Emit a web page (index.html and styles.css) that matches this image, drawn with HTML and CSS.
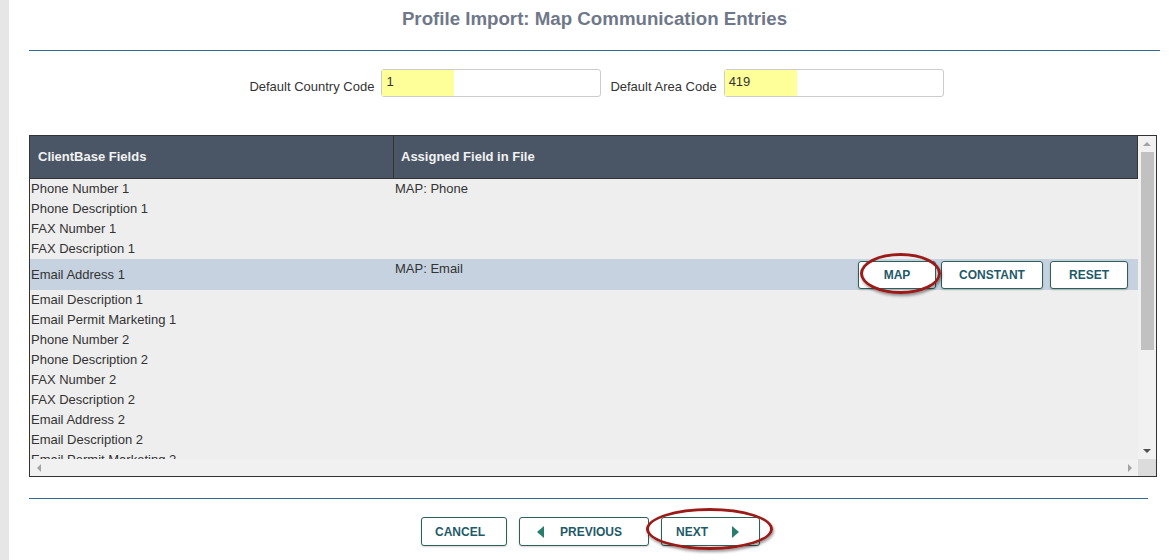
FILE: index.html
```html
<!DOCTYPE html>
<html>
<head>
<meta charset="utf-8">
<link rel="stylesheet" href="styles.css">
</head>
<body>
<div class="sidebar"></div>
<div class="main">
  <h1 class="title">Profile Import: Map Communication Entries</h1>
  <div class="rule rule-top"></div>

  <div class="defaults">
    <label class="lbl">Default Country Code</label>
    <div class="input"><span class="fill">1</span></div>
    <label class="lbl lbl-2">Default Area Code</label>
    <div class="input"><span class="fill">419</span></div>
  </div>

  <div class="grid-frame">
    <div class="viewport">
      <div class="head">
        <div class="hcell hcell-a">ClientBase Fields</div>
        <div class="hcell hcell-b">Assigned Field in File</div>
      </div>
      <div class="row"><div class="ca">Phone Number 1</div><div class="cb">MAP: Phone</div></div>
      <div class="row"><div class="ca">Phone Description 1</div><div class="cb"></div></div>
      <div class="row"><div class="ca">FAX Number 1</div><div class="cb"></div></div>
      <div class="row"><div class="ca">FAX Description 1</div><div class="cb"></div></div>
      <div class="row row-sel">
        <div class="ca">Email Address 1</div>
        <div class="cb">MAP: Email</div>
        <div class="actions">
          <span class="mark-wrap">
            <button class="btn btn-map">MAP</button>
            <span class="ring ring-map"></span>
          </span>
          <button class="btn btn-const">CONSTANT</button>
          <button class="btn btn-reset">RESET</button>
        </div>
      </div>
      <div class="row"><div class="ca">Email Description 1</div><div class="cb"></div></div>
      <div class="row"><div class="ca">Email Permit Marketing 1</div><div class="cb"></div></div>
      <div class="row"><div class="ca">Phone Number 2</div><div class="cb"></div></div>
      <div class="row"><div class="ca">Phone Description 2</div><div class="cb"></div></div>
      <div class="row"><div class="ca">FAX Number 2</div><div class="cb"></div></div>
      <div class="row"><div class="ca">FAX Description 2</div><div class="cb"></div></div>
      <div class="row"><div class="ca">Email Address 2</div><div class="cb"></div></div>
      <div class="row"><div class="ca">Email Description 2</div><div class="cb"></div></div>
      <div class="row"><div class="ca">Email Permit Marketing 2</div><div class="cb"></div></div>
      <div class="row"><div class="ca">Phone Number 3</div><div class="cb"></div></div>
    </div>
    <div class="vscroll">
      <div class="sb-btn"><span class="tri-up"></span></div>
      <div class="thumb"></div>
      <div class="spacer"></div>
      <div class="sb-btn"><span class="tri-down"></span></div>
    </div>
    <div class="hscroll">
      <div class="sb-hbtn"><span class="tri-left"></span></div>
      <div class="spacer"></div>
      <div class="sb-hbtn"><span class="tri-right"></span></div>
    </div>
    <div class="corner"></div>
  </div>

  <div class="footer">
    <div class="rule rule-bottom"></div>
    <div class="nav">
      <button class="btn btn-cancel">CANCEL</button>
      <button class="btn btn-prev"><span class="arrow-left"></span><span>PREVIOUS</span></button>
      <span class="mark-wrap">
        <button class="btn btn-next"><span>NEXT</span><span class="arrow-right"></span></button>
        <span class="ring ring-next"></span>
      </span>
    </div>
  </div>
</div>
</body>
</html>
```

FILE: styles.css
```css
html, body {
  margin: 0;
  padding: 0;
  background: #ffffff;
  font-family: "Liberation Sans", Arial, sans-serif;
  color: #333333;
}
body {
  display: flex;
  min-height: 560px;
  overflow: hidden;
}
.sidebar {
  width: 9px;
  flex: 0 0 9px;
  background: #e6e6e6;
}
.main {
  flex: 1;
  padding: 0 13px 0 20px;
}
.title {
  margin: 0;
  height: 50px;
  box-sizing: border-box;
  padding-top: 8px;
  font-size: 18.7px;
  line-height: 22px;
  font-weight: bold;
  color: #6f7889;
  text-align: center;
}
.rule {
  height: 1px;
  background: #336b98;
}
.defaults {
  display: flex;
  justify-content: center;
  align-items: flex-start;
  margin-top: 18px;
  height: 28px;
  padding-left: 4px;
}
.lbl {
  font-size: 13px;
  line-height: 16px;
  padding-top: 10px;
  margin-right: 7px;
  color: #333;
}
.lbl-2 {
  margin-left: 9px;
}
.input {
  width: 220px;
  height: 28px;
  box-sizing: border-box;
  border: 1px solid #cccccc;
  border-radius: 3px;
  background: #fff;
  display: flex;
}
.fill {
  width: 72px;
  background: #ffff99;
  font-size: 13px;
  line-height: 24px;
  padding-left: 4px;
  box-sizing: border-box;
  color: #333;
}

.grid-frame {
  margin-top: 38px;
  width: 1128px;
  height: 342px;
  box-sizing: border-box;
  border: 1px solid #333333;
  display: grid;
  grid-template-columns: 1fr 18px;
  grid-template-rows: 1fr 17px;
  background: #eeeeee;
}
.viewport {
  overflow: hidden;
  background: #eeeeee;
}
.head {
  display: flex;
  height: 43px;
  box-sizing: border-box;
  background: #4a5666;
  border-bottom: 1px solid #333333;
  border-right: 1px solid #333333;
}
.hcell {
  font-size: 13px;
  font-weight: bold;
  color: #f2f2f2;
  line-height: 42px;
}
.hcell-a {
  width: 364px;
  padding-left: 8px;
  box-sizing: border-box;
  border-right: 1px solid #333333;
}
.hcell-b {
  padding-left: 7px;
}
.row {
  display: flex;
  height: 20px;
  align-items: center;
  font-size: 13px;
  line-height: 16px;
  color: #333;
}
.ca {
  width: 365px;
  padding-left: 1px;
  box-sizing: border-box;
  flex: 0 0 365px;
}
.cb {
  flex: 1;
}
.row-sel {
  height: 31px;
  background: #c6d2e0;
}
.row-sel .cb {
  align-self: flex-start;
  padding-top: 2px;
}
.actions {
  display: flex;
  align-items: center;
  padding-right: 10px;
}
.btn {
  height: 28px;
  box-sizing: border-box;
  border: 1px solid #2b6157;
  border-radius: 3px;
  background: #ffffff;
  font-family: "Liberation Sans", Arial, sans-serif;
  font-size: 12px;
  font-weight: bold;
  color: #1f5a69;
  padding: 0;
  box-shadow: 0 1px 2px rgba(0, 0, 0, 0.18);
  display: inline-flex;
  align-items: center;
  justify-content: center;
  cursor: pointer;
}
.btn-map {
  width: 78px;
}
.btn-const {
  margin-left: 5px;
  width: 102px;
}
.btn-reset {
  margin-left: 7px;
  width: 78px;
}
.mark-wrap {
  position: relative;
  display: inline-flex;
}
.ring {
  position: absolute;
  box-sizing: border-box;
  border: 3px solid #9b1b18;
  border-radius: 50%;
  box-shadow: 1px 2px 3px rgba(0, 0, 0, 0.4);
  pointer-events: none;
}
.ring-map {
  left: 2px;
  top: -8px;
  width: 81px;
  height: 41px;
}
.ring-next {
  left: -15px;
  top: -9px;
  width: 127px;
  height: 42px;
}

.vscroll {
  background: #f1f1f1;
  display: flex;
  flex-direction: column;
}
.sb-btn {
  height: 16px;
  display: flex;
  align-items: center;
  justify-content: center;
}
.tri-up {
  width: 0;
  height: 0;
  border-left: 4px solid transparent;
  border-right: 4px solid transparent;
  border-bottom: 4px solid #a3a3a3;
}
.tri-down {
  width: 0;
  height: 0;
  border-left: 4px solid transparent;
  border-right: 4px solid transparent;
  border-top: 4px solid #505050;
}
.thumb {
  height: 198px;
  width: 13px;
  margin-left: 3px;
  background: #c1c1c1;
}
.spacer {
  flex: 1;
}
.hscroll {
  background: #f1f1f1;
  display: flex;
  align-items: center;
}
.sb-hbtn {
  width: 17px;
  height: 17px;
  display: flex;
  align-items: center;
  justify-content: center;
}
.tri-left {
  width: 0;
  height: 0;
  border-top: 4px solid transparent;
  border-bottom: 4px solid transparent;
  border-right: 4px solid #a3a3a3;
}
.tri-right {
  width: 0;
  height: 0;
  border-top: 4px solid transparent;
  border-bottom: 4px solid transparent;
  border-left: 4px solid #a3a3a3;
}
.corner {
  background: #dcdcdc;
}

.footer {
  width: 1119px;
  margin-top: 21px;
}
.nav {
  display: flex;
  justify-content: center;
  gap: 12px;
  margin-top: 18px;
  padding-left: 4px;
}
.nav .btn {
  height: 29px;
}
.btn-cancel {
  width: 86px;
  padding: 0 0 0 13px;
  justify-content: flex-start;
}
.btn-prev {
  width: 130px;
  padding: 0 0 0 17px;
  gap: 16px;
  justify-content: flex-start;
}
.btn-next {
  width: 99px;
  padding: 0 0 0 14px;
  gap: 24px;
  justify-content: flex-start;
}
.arrow-left {
  width: 0;
  height: 0;
  border-top: 6px solid transparent;
  border-bottom: 6px solid transparent;
  border-right: 7px solid #2a7d6c;
}
.arrow-right {
  width: 0;
  height: 0;
  border-top: 6px solid transparent;
  border-bottom: 6px solid transparent;
  border-left: 7px solid #2a7d6c;
}
```
